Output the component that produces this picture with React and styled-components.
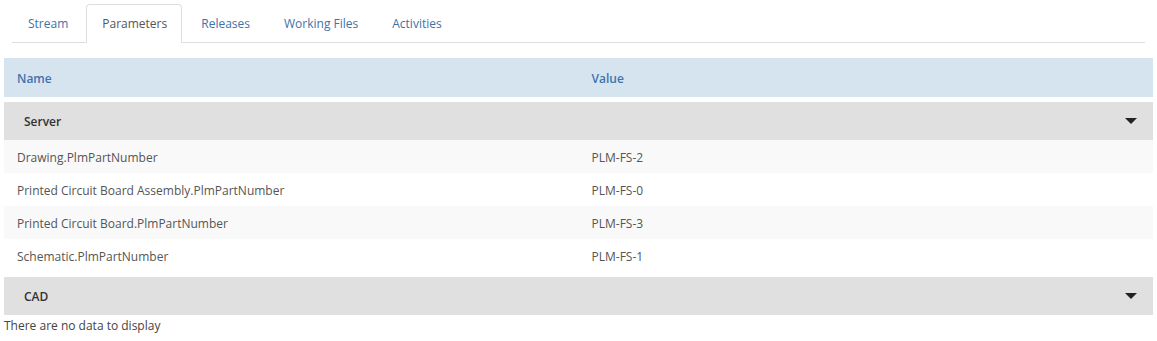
import React from "react";
import styled, { createGlobalStyle } from "styled-components";

const Global = createGlobalStyle`
  html, body { margin: 0; padding: 0; background: #fff; }
  body { font-family: "Open Sans", "Noto Sans", sans-serif; font-size: 12px; color: #555; }
  * { box-sizing: border-box; }
`;

const Page = styled.div`
  padding: 4px 4px 0;
`;

const TabBar = styled.div`
  display: flex;
  margin: 0 8px;
  border-bottom: 1px solid #dddddd;
`;

const Tab = styled.div`
  display: flex;
  align-items: center;
  padding: 0 14px 1px 15px;
  margin-right: 3px;
  margin-bottom: -1px;
  height: 39px;
  font-size: 12px;
  color: ${(p) => (p.$active ? "#555555" : "#3d72ab")};
  background: ${(p) => (p.$active ? "#fff" : "transparent")};
  border: 1px solid ${(p) => (p.$active ? "#dddddd" : "transparent")};
  border-bottom-color: ${(p) => (p.$active ? "#fff" : "transparent")};
  border-radius: 4px 4px 0 0;
  cursor: pointer;
`;

const Table = styled.div`
  margin-top: 15px;
`;

const HeaderRow = styled.div`
  display: grid;
  grid-template-columns: 1fr 1fr;
  height: 39px;
  align-items: center;
  padding-top: 1px;
  background: #d6e4f0;
  color: #3f73ae;
  font-weight: 600;
`;

const Cell = styled.div`
  padding-left: 13px;
`;

const GroupRow = styled.div`
  display: flex;
  align-items: center;
  justify-content: space-between;
  height: 38px;
  margin-top: 5px;
  padding: 1px 16px 0 20px;
  background: #e0e0e0;
  color: #333;
  font-weight: 600;
`;

const Caret = styled.span`
  width: 0;
  height: 0;
  border-left: 6px solid transparent;
  border-right: 6px solid transparent;
  border-top: 6px solid #222;
  margin-top: -2px;
`;

const DataRow = styled.div`
  display: grid;
  grid-template-columns: 1fr 1fr;
  height: 33px;
  align-items: center;
  padding-top: 2px;
  background: ${(p) => (p.$alt ? "#f9f9f9" : "#fff")};
  color: #555;
`;

const Empty = styled.div`
  padding-top: 3px;
  color: #444;
  line-height: 16px;
`;

const rows = [
  ["Drawing.PlmPartNumber", "PLM-FS-2"],
  ["Printed Circuit Board Assembly.PlmPartNumber", "PLM-FS-0"],
  ["Printed Circuit Board.PlmPartNumber", "PLM-FS-3"],
  ["Schematic.PlmPartNumber", "PLM-FS-1"],
];

const tabs = ["Stream", "Parameters", "Releases", "Working Files", "Activities"];

export default function App() {
  return (
    <Page>
      <Global />
      <TabBar>
        {tabs.map((t) => (
          <Tab key={t} $active={t === "Parameters"}>{t}</Tab>
        ))}
      </TabBar>
      <Table>
        <HeaderRow>
          <Cell>Name</Cell>
          <Cell>Value</Cell>
        </HeaderRow>
        <GroupRow>
          <span>Server</span>
          <Caret />
        </GroupRow>
        {rows.map(([n, v], i) => (
          <DataRow key={n} $alt={i % 2 === 0}>
            <Cell>{n}</Cell>
            <Cell>{v}</Cell>
          </DataRow>
        ))}
        <GroupRow>
          <span>CAD</span>
          <Caret />
        </GroupRow>
        <Empty>There are no data to display</Empty>
      </Table>
    </Page>
  );
}
